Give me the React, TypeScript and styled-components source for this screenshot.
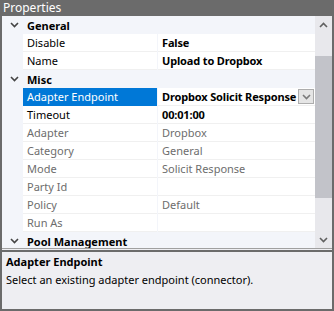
import React from "react";
import styled, { createGlobalStyle } from "styled-components";

const Global = createGlobalStyle`
  body {
    margin: 0;
    overflow: hidden;
    font-family: "Noto Sans", "Open Sans", sans-serif;
  }
`;

const Frame = styled.div`
  width: 334px;
  height: 311px;
  box-sizing: border-box;
  background: #6b6b6b;
  padding: 0 2px 2px 2px;
  display: flex;
  flex-direction: column;
`;

const TitleBar = styled.div`
  height: 16px;
  line-height: 15px;
  color: #ffffff;
  font-size: 12px;
  padding-left: 1px;
`;

const GridArea = styled.div`
  height: 232px;
  display: flex;
  background: #ffffff;
`;

const Rows = styled.div`
  flex: 1;
  overflow: hidden;
`;

const CategoryRow = styled.div`
  height: 18px;
  display: flex;
  align-items: center;
  background: #f3f5fa;
  font-size: 11px;
  font-weight: bold;
  color: #000;
`;

const Toggle = styled.span`
  width: 21px;
  display: flex;
  justify-content: center;
  padding-left: 2px;
`;

const CategoryName = styled.span`
  padding-left: 2px;
`;

const PropRow = styled.div`
  height: 18px;
  display: flex;
  background: #f3f5fa;
  font-size: 11px;
`;

const Label = styled.div<{ $selected?: boolean; $dim?: boolean }>`
  width: 134px;
  margin-left: 21px;
  box-sizing: border-box;
  padding-left: 4px;
  line-height: 17px;
  white-space: nowrap;
  overflow: hidden;
  background: ${(p) => (p.$selected ? "#0078d7" : "#ffffff")};
  color: ${(p) => (p.$selected ? "#ffffff" : p.$dim ? "#6d6d6d" : "#000000")};
  border-bottom: 1px solid ${(p) => (p.$selected ? "#0078d7" : "#f0f0f0")};
`;

const Value = styled.div<{ $bold?: boolean; $dim?: boolean }>`
  flex: 1;
  margin-left: 1px;
  padding-left: 4px;
  line-height: 17px;
  background: #ffffff;
  white-space: nowrap;
  overflow: hidden;
  display: flex;
  align-items: center;
  font-weight: ${(p) => (p.$bold ? "bold" : "normal")};
  letter-spacing: ${(p) => (p.$bold ? "-0.15px" : "0")};
  color: ${(p) => (p.$dim ? "#6d6d6d" : "#000000")};
  border-bottom: 1px solid #f0f0f0;
`;

const ValueText = styled.span`
  flex: 1;
  white-space: nowrap;
`;

const DropButton = styled.span`
  width: 16px;
  height: 15px;
  flex-shrink: 0;
  box-sizing: border-box;
  margin-right: 1px;
  border: 1px solid #adadad;
  background: #e5e5e5;
  display: flex;
  align-items: center;
  justify-content: center;
`;

const Scrollbar = styled.div`
  width: 17px;
  background: #e8e8ec;
  display: flex;
  flex-direction: column;
  align-items: center;
`;

const Arrow = styled.div`
  height: 17px;
  display: flex;
  align-items: center;
  justify-content: center;
`;

const Track = styled.div`
  flex: 1;
  width: 100%;
  display: flex;
  flex-direction: column;
`;

const Thumb = styled.div`
  margin-top: 23px;
  height: 142px;
  background: #c2c3c9;
`;

const Splitter = styled.div`
  height: 1px;
  background: #eeeef2;
  border-top: 1px solid #a0a0a0;
  border-bottom: 2px solid #6b6b6b;
`;

const Description = styled.div`
  flex: 1;
  background: #eeeef2;
  padding: 1px 0 0 4px;
  font-size: 11px;
  color: #000;
`;

const DescTitle = styled.div`
  font-weight: bold;
  line-height: 18px;
`;

const DescText = styled.div`
  line-height: 18px;
`;

const Chevron = ({ up, color = "#3c3c3c" }: { up?: boolean; color?: string }) => (
  <svg width="9" height="6" viewBox="0 0 9 6">
    <path
      d={up ? "M1 5 L4.5 1.5 L8 5" : "M1 1 L4.5 4.5 L8 1"}
      fill="none"
      stroke={color}
      strokeWidth="1.6"
    />
  </svg>
);

type Prop = {
  label: string;
  value: string;
  bold?: boolean;
  dim?: boolean;
  selected?: boolean;
  drop?: boolean;
};

type Section = { name: string; props: Prop[] };

const sections: Section[] = [
  {
    name: "General",
    props: [
      { label: "Disable", value: "False", bold: true },
      { label: "Name", value: "Upload to Dropbox", bold: true },
    ],
  },
  {
    name: "Misc",
    props: [
      { label: "Adapter Endpoint", value: "Dropbox Solicit Response", bold: true, selected: true, drop: true },
      { label: "Timeout", value: "00:01:00", bold: true },
      { label: "Adapter", value: "Dropbox", dim: true },
      { label: "Category", value: "General", dim: true },
      { label: "Mode", value: "Solicit Response", dim: true },
      { label: "Party Id", value: "", dim: true },
      { label: "Policy", value: "Default", dim: true },
      { label: "Run As", value: "", dim: true },
    ],
  },
  { name: "Pool Management", props: [] },
];

export default function App() {
  return (
    <>
      <Global />
      <Frame>
        <TitleBar>Properties</TitleBar>
        <GridArea>
          <Rows>
            {sections.map((s) => (
              <React.Fragment key={s.name}>
                <CategoryRow>
                  <Toggle>
                    <Chevron color="#444" />
                  </Toggle>
                  <CategoryName>{s.name}</CategoryName>
                </CategoryRow>
                {s.props.map((p) => (
                  <PropRow key={p.label}>
                    <Label $selected={p.selected} $dim={p.dim}>
                      {p.label}
                    </Label>
                    <Value $bold={p.bold} $dim={p.dim}>
                      <ValueText>{p.value}</ValueText>
                      {p.drop && (
                        <DropButton>
                          <Chevron color="#7a7a7a" />
                        </DropButton>
                      )}
                    </Value>
                  </PropRow>
                ))}
              </React.Fragment>
            ))}
          </Rows>
          <Scrollbar>
            <Arrow>
              <Chevron up color="#606060" />
            </Arrow>
            <Track>
              <Thumb />
            </Track>
            <Arrow>
              <Chevron color="#606060" />
            </Arrow>
          </Scrollbar>
        </GridArea>
        <Splitter />
        <Description>
          <DescTitle>Adapter Endpoint</DescTitle>
          <DescText>Select an existing adapter endpoint (connector).</DescText>
        </Description>
      </Frame>
    </>
  );
}
